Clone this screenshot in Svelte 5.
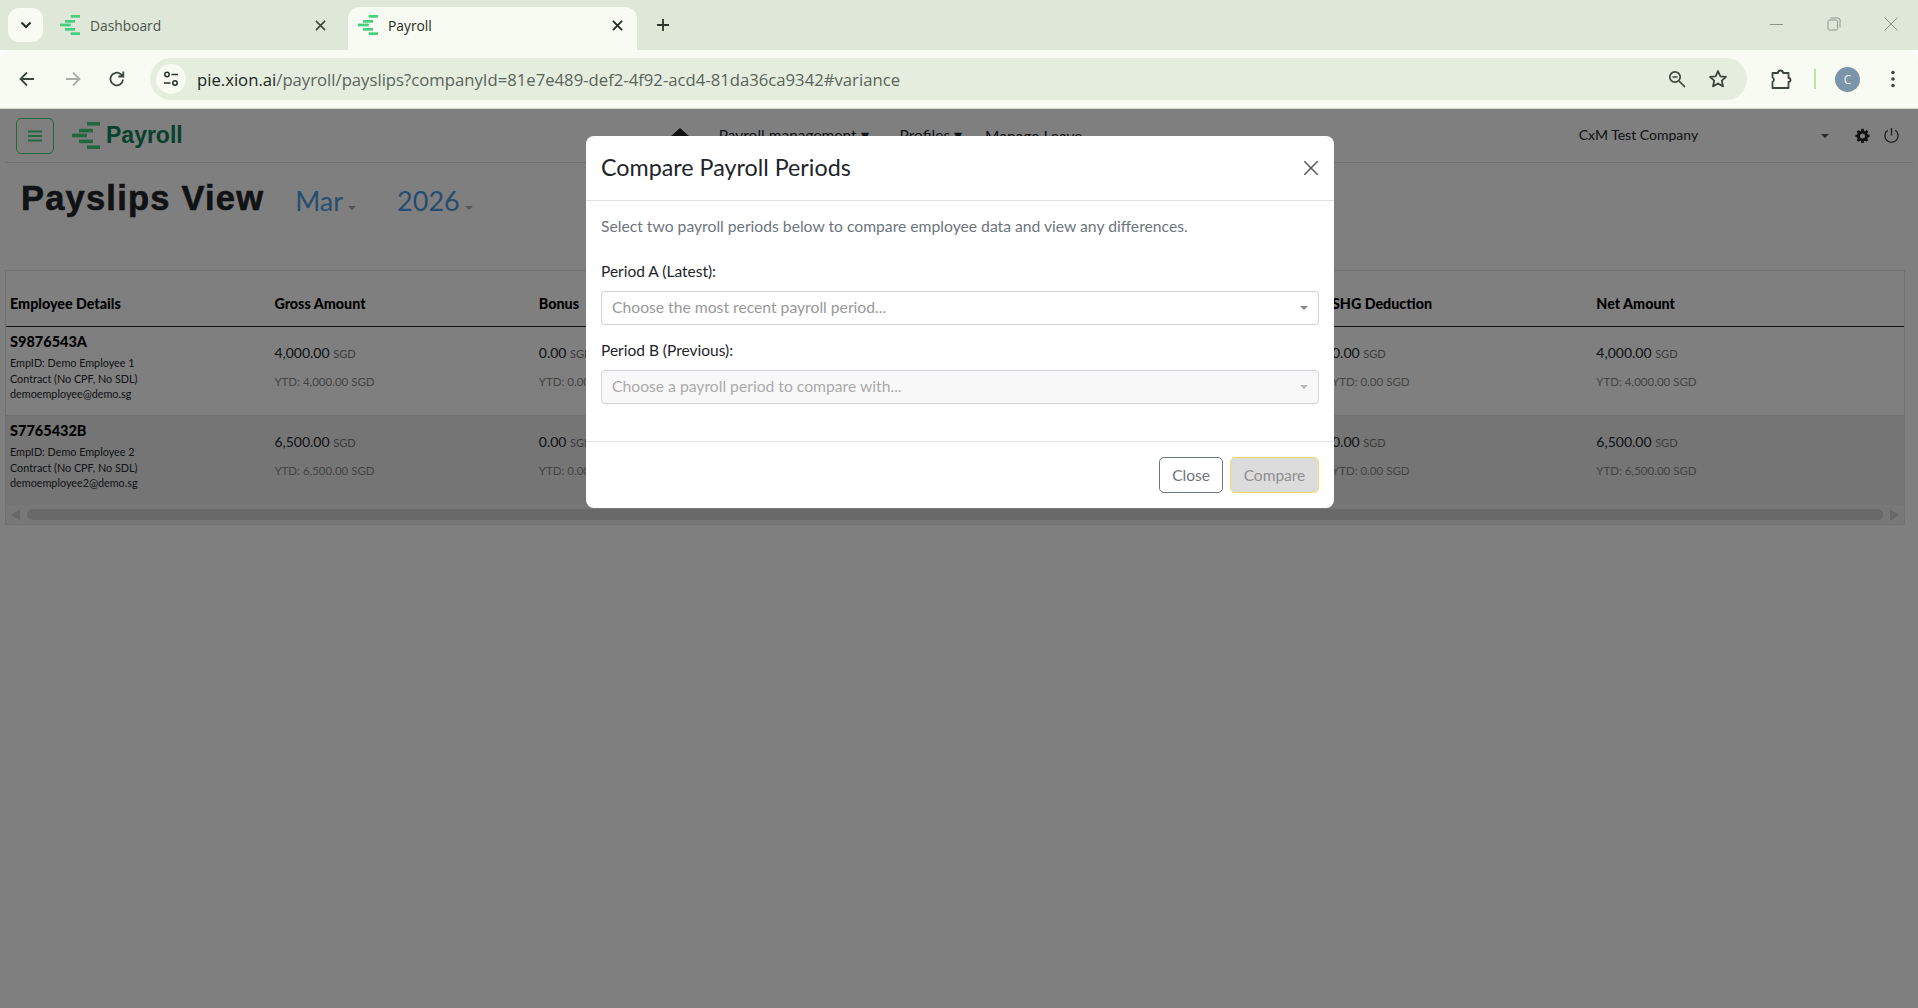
<script>
  const rows = [
    { id: 'S9876543A', emp: 'EmpID: Demo Employee 1', type: 'Contract (No CPF, No SDL)', mail: 'demoemployee@demo.sg', amt: '4,000.00' },
    { id: 'S7765432B', emp: 'EmpID: Demo Employee 2', type: 'Contract (No CPF, No SDL)', mail: 'demoemployee2@demo.sg', amt: '6,500.00' }
  ];
  const bars = [[10.7,0,9.3,2.7],[5,5,10,2.7],[0,8.6,10.7,2.7],[5,13,10,2.7],[10.7,17.3,9.3,2.7]];
</script>

{#snippet logo(w, h, cls)}
  <svg class={cls} width={w} height={h} viewBox="0 0 20 20" preserveAspectRatio="none">
    {#each bars as b}<rect x={b[0]} y={b[1]} width={b[2]} height={b[3]} fill="#46cf80" />{/each}
  </svg>
{/snippet}

{#snippet x(size, color, sw)}
  <svg width={size} height={size} viewBox="0 0 12 12"><path d="M1 1 11 11M11 1 1 11" stroke={color} stroke-width={sw} fill="none" /></svg>
{/snippet}

{#snippet amount(a)}
  <div class="cell money">
    <div class="amt">{a} <small>SGD</small></div>
    <div class="ytd">YTD: {a} SGD</div>
  </div>
{/snippet}

<div class="window">
  <div class="strip">
    <button class="tabs-menu" aria-label="Search tabs">
      <svg width="12" height="8" viewBox="0 0 12 8"><path d="M1.5 1.5 6 6l4.5-4.5" stroke="#1f2a1f" stroke-width="2" fill="none" /></svg>
    </button>
    <div class="tab">
      {@render logo(20, 20, 'fav')}
      <span class="tab-title dim">Dashboard</span>
      {@render x(11, '#3b463b', 1.7)}
    </div>
    <div class="tab active">
      {@render logo(20, 20, 'fav')}
      <span class="tab-title">Payroll</span>
      {@render x(11, '#1f2a1f', 1.9)}
    </div>
    <svg class="plus" width="14" height="14" viewBox="0 0 14 14"><path d="M7 1v12M1 7h12" stroke="#2c352c" stroke-width="1.8" /></svg>
    <div class="win-ctrls">
      <svg width="14" height="14" viewBox="0 0 14 14"><path d="M0 7.5h13" stroke="#8b948a" stroke-width="1" /></svg>
      <svg width="14" height="14" viewBox="0 0 14 14"><rect x="1" y="3" width="9.5" height="10" rx="1.5" fill="none" stroke="#8b948a" /><path d="M3.5 1h7.5a2 2 0 0 1 2 2v7.5" fill="none" stroke="#8b948a" /></svg>
      <svg width="14" height="14" viewBox="0 0 14 14"><path d="M.5.5l13 13M13.500.5l-13 13" stroke="#8b948a" stroke-width="1" /></svg>
    </div>
  </div>

  <div class="toolbar">
    <svg class="tool" width="18" height="18" viewBox="0 0 18 18"><path d="M16 9H2.500M9 2.500 2.500 9 9 15.500" stroke="#3a473a" stroke-width="1.8" fill="none" /></svg>
    <svg class="tool fwd" width="18" height="18" viewBox="0 0 18 18"><path d="M2 9h13.500M9 2.500 15.500 9 9 15.500" stroke="#a9aea7" stroke-width="1.8" fill="none" /></svg>
    <svg class="tool rel" width="18" height="18" viewBox="0 0 18 18"><path d="M15 9.500A6.300 6.300 0 1 1 12.800 4.200L15 6.300M15.300 1.500v5h-5" stroke="#3a473a" stroke-width="1.800" fill="none" /></svg>
    <div class="omni">
      <span class="tune">
        <svg width="16" height="16" viewBox="0 0 16 16"><circle cx="4" cy="3.500" r="2.200" fill="none" stroke="#243024" stroke-width="1.500" /><path d="M8.500 3.500H15M1 12h6.500" stroke="#243024" stroke-width="1.500" /><circle cx="12" cy="12" r="2.200" fill="none" stroke="#243024" stroke-width="1.500" /></svg>
      </span>
      <span class="url"><b>pie.xion.ai</b>/payroll/payslips?companyId=81e7e489-def2-4f92-acd4-81da36ca9342#variance</span>
      <svg width="18" height="18" viewBox="0 0 18 18"><circle cx="7" cy="7" r="5.200" fill="none" stroke="#3a473a" stroke-width="1.700" /><path d="M4.500 7h5M11 11l6 6" stroke="#3a473a" stroke-width="1.700" /></svg>
      <svg class="star" width="20" height="20" viewBox="0 0 20 20"><path d="M10 2l2.400 5.300 5.600.6-4.200 3.800 1.200 5.700L10 14.500l-5 2.900 1.200-5.700L2 7.900l5.600-.6z" fill="none" stroke="#3a473a" stroke-width="1.800" stroke-linejoin="round" /></svg>
    </div>
    <svg class="puzzle" width="21" height="21" viewBox="0 0 21 21"><path d="M1.500 4h5.500a2.500 2.500 0 0 1 5 0h5.500v5a2 2 0 0 1 0 4v6H1.500v-6a2.500 2.500 0 0 0 0-4.500z" fill="none" stroke="#3a473a" stroke-width="1.800" stroke-linejoin="round" /></svg>
    <span class="divider"></span>
    <span class="avatar">C</span>
    <svg class="dots" width="6" height="18" viewBox="0 0 6 18"><circle cx="3" cy="2.500" r="1.800" fill="#3a473a" /><circle cx="3" cy="9" r="1.800" fill="#3a473a" /><circle cx="3" cy="15.500" r="1.800" fill="#3a473a" /></svg>
  </div>

  <div class="page">
    <header class="nav">
      <button class="burger" aria-label="Menu">
        <svg width="14" height="12" viewBox="0 0 14 12"><path d="M0 1.500h14M0 6h14M0 10.500h14" stroke="#46cf80" stroke-width="1.800" /></svg>
      </button>
      {@render logo(28, 27, 'brand-logo')}
      <span class="brand">Payroll</span>
      <nav class="menu">
        <svg width="20" height="16" viewBox="0 0 20 16"><path d="M10 0 0 9h3v7h14V9h3z" fill="#222" /></svg>
        <span class="m1">Payroll management ▾</span>
        <span class="m2">Profiles ▾</span>
        <span class="m3">Manage Leave</span>
      </nav>
      <span class="company">CxM Test Company</span>
      <i class="caret sm"></i>
      <svg class="gear" width="15" height="15" viewBox="-1 -1 18 18"><path fill="#222" fill-rule="evenodd" d="M6.600 0h2.800l.4 2.200 1.300.6 1.900-1.300 2 2-1.300 1.900.6 1.300 2.200.4v2.800l-2.200.4-.6 1.300 1.300 1.900-2 2-1.900-1.300-1.300.6-.4 2.200H6.600l-.4-2.200-1.300-.6L3 15.500l-2-2 1.300-1.900-.6-1.300L-.5 9.900V7.100l2.200-.4.6-1.300L1 3.500l2-2 1.900 1.300 1.300-.6zM8 5.500a3 3 0 1 0 0 6 3 3 0 0 0 0-6z" /></svg>
      <svg class="power" width="17" height="17" viewBox="0 0 18 18"><path d="M9 1v8M5 3.500a7 7 0 1 0 8 0" fill="none" stroke="#333" stroke-width="1.300" /></svg>
    </header>

    <div class="title-row">
      <h1>Payslips View</h1>
      <span class="pick mar">Mar<i class="caret"></i></span>
      <span class="pick">2026<i class="caret"></i></span>
    </div>

    <section class="card">
      <div class="grid head">
        <div class="cell">Employee Details</div>
        <div class="cell">Gross Amount</div>
        <div class="cell">Bonus</div>
        <div class="cell"></div>
        <div class="cell"></div>
        <div class="cell">SHG Deduction</div>
        <div class="cell">Net Amount</div>
      </div>
      {#each rows as r, i}
        <div class="grid row" class:alt={i === 1}>
          <div class="cell who">
            <div class="id">{r.id}</div>
            <div>{r.emp}</div>
            <div>{r.type}</div>
            <div>{r.mail}</div>
          </div>
          {@render amount(r.amt)}
          {@render amount('0.00')}
          <div class="cell"></div>
          <div class="cell"></div>
          {@render amount('0.00')}
          {@render amount(r.amt)}
        </div>
      {/each}
      <div class="scroll">
        <i class="arrow left"></i>
        <span class="thumb"></span>
        <i class="arrow right"></i>
      </div>
    </section>

    <div class="backdrop">
      <div class="modal">
        <div class="m-head">
          <h2>Compare Payroll Periods</h2>
          {@render x(16, '#555', 1.1)}
        </div>
        <div class="m-body">
          <p>Select two payroll periods below to compare employee data and view any differences.</p>
          <div class="lab">Period A (Latest):</div>
          <div class="select"><span>Choose the most recent payroll period...</span><i class="caret dark"></i></div>
          <div class="lab b">Period B (Previous):</div>
          <div class="select off"><span>Choose a payroll period to compare with...</span><i class="caret"></i></div>
        </div>
        <div class="m-foot">
          <button class="btn close">Close</button>
          <button class="btn go">Compare</button>
        </div>
      </div>
    </div>
  </div>
</div>

<style>
  :global(body) { margin: 0; background: #fff; overflow: hidden; }
  .window { width: 1918px; height: 1008px; display: flex; flex-direction: column; font-family: Lato, sans-serif; color: #212529; }
  button { font: inherit; padding: 0; }

  .strip { height: 50px; flex: none; background: #dfe8d8; display: flex; align-items: flex-start; position: relative; font-family: "Open Sans", sans-serif; font-size: 13.800px; }
  .tabs-menu { width: 35px; height: 34px; margin: 8px 0 0 8px; border: 0; border-radius: 11px; background: #f8fbf2; display: flex; align-items: center; justify-content: center; }
  .tab { width: 305px; height: 43px; margin-top: 7px; padding: 0 22px 7px 17px; box-sizing: border-box; display: flex; align-items: center; border-radius: 12px 12px 0 0; }
  .tab.active { width: 289px; background: #f8fbf2; padding-left: 10px; padding-right: 14px; }
  .tab :global(.fav) { flex: none; }
  .tab-title { flex: 1; margin-left: 10px; color: #1f2a1f; }
  .tab-title.dim { color: #4a544a; }
  .plus { margin: 18px 0 0 19px; }
  .win-ctrls { margin-left: auto; margin-right: 20px; margin-top: 17px; display: flex; gap: 43px; }

  .toolbar { height: 59px; flex: none; background: #f8fbf2; border-bottom: 1px solid #d6d9d0; border-radius: 11px 11px 0 0; display: flex; align-items: center; box-sizing: border-box; padding: 0 0 0 18px; }
  .fwd { margin-left: 28px; }
  .rel { margin-left: 26px; }
  .omni { margin-left: 24px; width: 1597px; height: 42px; box-sizing: border-box; background: #e4edde; border-radius: 21px; display: flex; align-items: center; padding: 0 19px 0 6px; }
  .tune { width: 30px; height: 30px; background: #f8fbf2; border-radius: 50%; display: flex; align-items: center; justify-content: center; flex: none; }
  .url { flex: 1; margin-left: 11px; font-family: "Open Sans", sans-serif; font-size: 16.700px; color: #5a645a; white-space: nowrap; }
  .url b { font-weight: 400; color: #1c261c; }
  .star { margin-left: 22px; }
  .puzzle { margin-left: 24px; }
  .divider { width: 2px; height: 20px; background: #b5e8a5; margin-left: 22px; }
  .avatar { width: 25px; height: 25px; border-radius: 50%; background: #7a94a8; color: #f2f5f5; font: 12px "Open Sans", sans-serif; display: flex; align-items: center; justify-content: center; margin-left: 19px; }
  .dots { margin-left: 30px; }

  .page { flex: 1; position: relative; overflow: hidden; background: #fff; }
  .nav { height: 53px; margin: 0 5px 0 5px; padding-left: 11px; border-bottom: 1px solid #dee2e6; display: flex; align-items: center; font-size: 15.500px; }
  .burger { width: 38px; height: 36px; background: transparent; border: 1px solid #46cf80; border-radius: 5px; display: flex; align-items: center; justify-content: center; flex: none; }
  .nav :global(.brand-logo) { margin-left: 18px; flex: none; }
  .brand { margin-left: 6px; font: 700 23px "Liberation Sans", sans-serif; color: #0c8458; }
  .menu { margin-left: 487px; width: 909px; flex: none; display: flex; align-items: center; }
  .m1 { margin-left: 29px; }
  .m2 { margin-left: 31px; }
  .m3 { margin-left: 23px; }
  .company { width: 236px; flex: none; font-size: 14px; margin-bottom: 2px; }
  .caret { display: inline-block; width: 0; height: 0; border: 4px solid transparent; border-top-color: #777; border-bottom: 0; }
  .caret.sm { border-width: 4px; border-bottom: 0; border-top-color: #555; margin-left: 6px; }
  .gear { margin-left: 26px; }
  .power { margin-left: 13px; }

  .title-row { display: flex; padding: 15px 0 0 21px; height: 107px; box-sizing: border-box; align-items: flex-start; }
  h1 { margin: 0; font: 700 34.500px/40px "Liberation Sans", sans-serif; letter-spacing: 1.200px; color: #212529; -webkit-text-stroke: .6px #212529; }
  .pick { margin: 3px 0 0 31px; font-size: 27px; line-height: 40px; color: #4a9ae0; }
  .pick.mar { margin-right: 10px; }
  .pick .caret { margin-left: 5px; border-top-color: #aaa; vertical-align: 1px; }

  .card { margin: 0 13px 0 5px; border: 1px solid #dee2e6; height: 255px; box-sizing: border-box; }
  .grid { display: grid; grid-template-columns: repeat(6, 264.4px) 1fr; }
  .cell { padding-left: 4px; min-width: 0; white-space: nowrap; }
  .head { height: 56px; box-sizing: border-box; border-bottom: 1px solid #212529; align-items: end; padding-bottom: 13px; font-weight: 900; font-size: 14.300px; line-height: 18px; color: #000; }
  .row { height: 89px; box-sizing: border-box; border-bottom: 1px solid #dee2e6; }
  .row.alt { background: #ebebeb; border-bottom: 0; }
  .who { padding-top: 6px; font-size: 10.800px; line-height: 15.500px; }
  .id { font-weight: 900; font-size: 14.500px; line-height: 18px; color: #000; margin-bottom: 4px; }
  .money { padding-top: 17px; }
  .amt { font-size: 14px; line-height: 18px; }
  .amt small { font-size: 11px; color: #777; }
  .ytd { margin-top: 11px; font-size: 11.500px; line-height: 16px; color: #888; }

  .scroll { height: 19px; background: #f1f1f1; display: flex; align-items: center; gap: 7px; padding: 0 5px; }
  .thumb { flex: 1; height: 11px; border-radius: 6px; background: #d2d2d2; }
  .arrow { width: 0; height: 0; border: 6px solid transparent; }
  .arrow.left { border-right: 9px solid #d2d2d2; border-left: 0; }
  .arrow.right { border-left: 9px solid #d2d2d2; border-right: 0; }

  .backdrop { position: absolute; inset: 0; background: rgba(0, 0, 0, .5); display: flex; justify-content: center; align-items: flex-start; padding: 27px 0 0 2px; box-sizing: border-box; }
  .modal { width: 748px; height: 372px; background: #fff; border-radius: 8px; display: flex; flex-direction: column; }
  .m-head { height: 65px; flex: none; box-sizing: border-box; border-bottom: 1px solid #dee2e6; display: flex; align-items: center; justify-content: space-between; padding: 0 15px 3px; }
  .m-head :global(svg) { margin-top: 3px; }
  h2 { margin: 0; font-weight: 400; font-size: 23.300px; color: #212529; }
  .m-body { flex: 1; padding: 15px 15px 0; }
  p { margin: 0; font-size: 15.700px; line-height: 20px; color: #6c757d; }
  .lab { margin-top: 25px; font-size: 15.500px; line-height: 20px; color: #212529; }
  .lab.b { margin-top: 15px; }
  .select { margin-top: 10px; height: 34px; box-sizing: border-box; border: 1px solid #ced4da; border-radius: 4px; padding: 0 10px 2px; display: flex; align-items: center; justify-content: space-between; font-size: 15.700px; color: #999; }
  .select.off { background: #f8f8f8; color: #aaa; }
  .select .caret { border-top-color: #bbb; margin-top: 2px; }
  .select .caret.dark { border-top-color: #888; }
  .m-foot { height: 67px; flex: none; border-top: 1px solid #dee2e6; display: flex; justify-content: flex-end; align-items: flex-start; padding: 15px 15px 0; gap: 7px; box-sizing: border-box; }
  .btn { height: 36px; border-radius: 5px; font-size: 15.500px; background: #fff; }
  .close { width: 64px; border: 1px solid #6c757d; color: #6c757d; }
  .go { width: 89px; border: 1px solid #ffd966; background: #dcdcdc; color: #8f8f8f; }
</style>
